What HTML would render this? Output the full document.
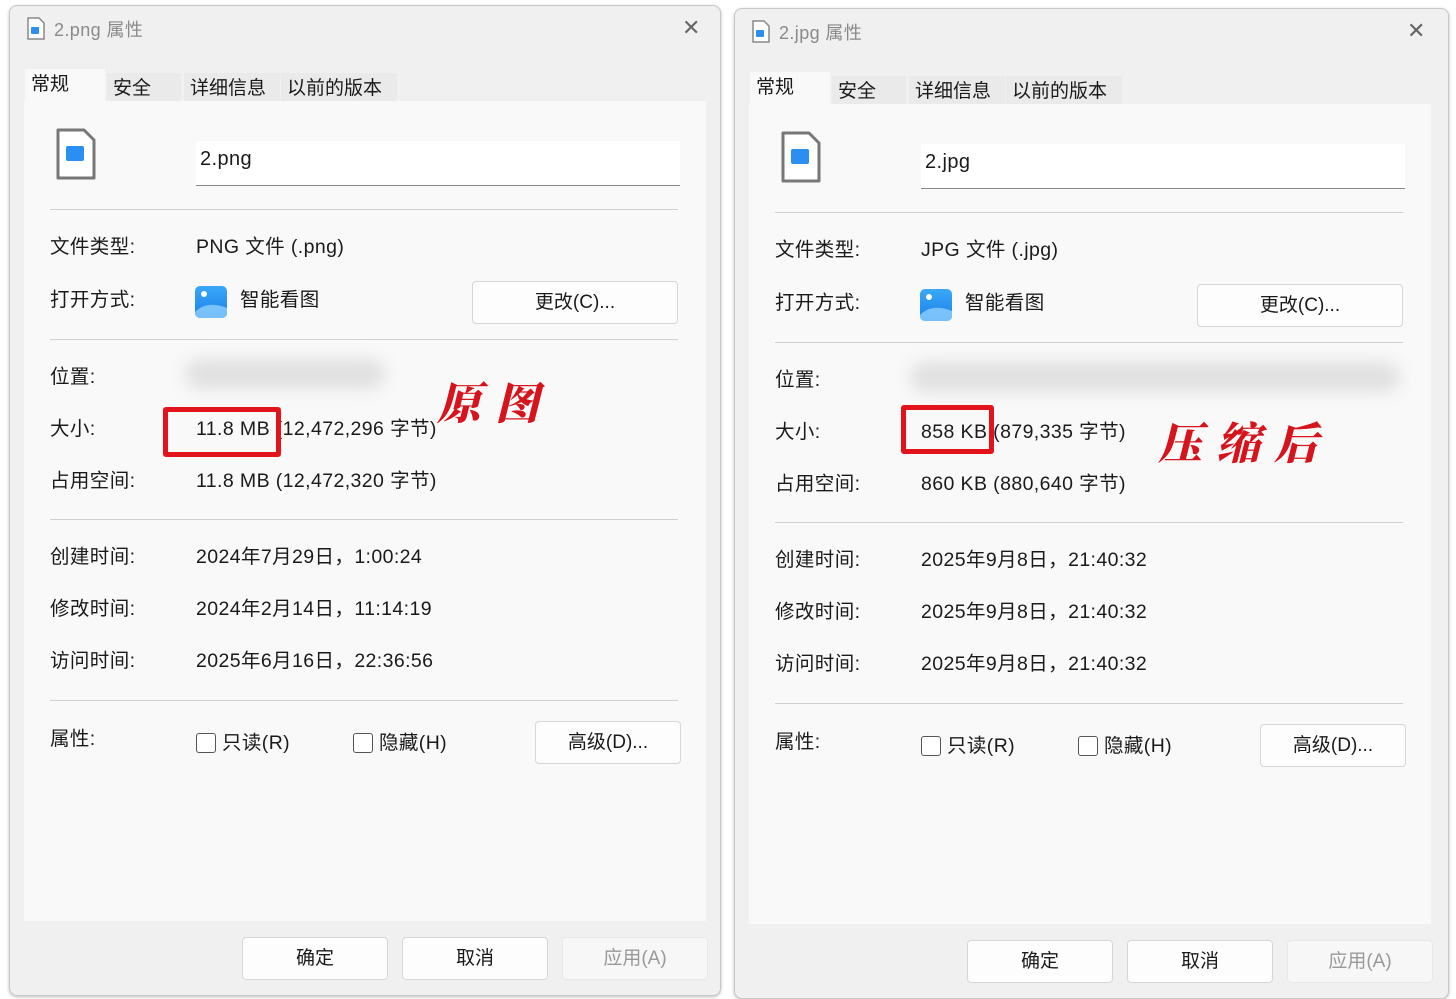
<!DOCTYPE html>
<html><head><meta charset="utf-8"><style>
body{margin:0;width:1456px;height:997px;background:#fff;position:relative;overflow:hidden;font-family:"Liberation Sans","Noto Sans CJK SC",sans-serif;color:#1a1a1a}
.win{position:absolute;top:0;left:0;width:710px;height:989px;background:#f0f0f0;border:1px solid #c8c8c8;border-radius:8px;box-shadow:0 1px 3px rgba(0,0,0,.25)}
.a{position:absolute;white-space:nowrap;font-size:19.5px;line-height:24px;letter-spacing:.4px}
.panel{position:absolute;left:14px;top:95px;width:682px;height:820px;background:#f9f9f9}
.tab{position:absolute;top:67px;height:29px;background:#eaeaea;font-size:19px;line-height:32px;padding:0 6px}
.sep{position:absolute;left:40px;width:628px;height:1px;background:#d0d0d0}
.btn{position:absolute;background:#fdfdfd;border:1px solid #d6d6d6;border-radius:4px;font-size:19px;text-align:center}
.cb{position:absolute;width:18px;height:18px;border:1px solid #555;border-radius:3px;background:#fff}
.red{position:absolute;border:5px solid #e3131b;border-radius:3px}
.cal{position:absolute;font-family:"Noto Serif CJK SC",serif;font-weight:900;font-style:italic;color:#d7141c;font-size:44px;text-shadow:0 0 2px #fff,0 0 3px #fff;letter-spacing:14px}
.blur{position:absolute;height:30px;background:#e0e0e0;filter:blur(8px);border-radius:15px}
</style></head><body>

<div class="win" style="left:9px;top:5px">
 <svg class="a" style="left:16px;top:11px" width="20" height="24" viewBox="0 0 20 24"><path d="M2 1h11l5 5v16H2z" fill="#fff" stroke="#888" stroke-width="1.5"/><rect x="5" y="10" width="8" height="7" rx="1" fill="#2a8ff0"/></svg>
 <div class="a" style="left:44px;top:12px;color:#8a8a8a;font-size:18px">2.png 属性</div>
 <div class="a" style="left:672px;top:10px;color:#666;font-size:22px">✕</div>
 <div class="tab" style="left:15px;top:63px;height:33px;width:68px;background:#f9f9f9">常规</div>
 <div class="tab" style="left:97px;width:62px">安全</div>
 <div class="tab" style="left:174px;width:84px">详细信息</div>
 <div class="tab" style="left:271px;width:104px">以前的版本</div>
 <div class="panel"></div>
 <svg class="a" style="left:45px;top:121px" width="42" height="54" viewBox="0 0 42 54"><path d="M3 3h26l10 10v38H3z" fill="#fff" stroke="#777" stroke-width="3" stroke-linejoin="round"/><rect x="11" y="19" width="18" height="15" rx="2" fill="#2a8ff0"/></svg>
 <div class="a" style="left:186px;top:135px;width:484px;height:44px;background:#fff;border-bottom:1px solid #888"></div>
 <div class="a" style="left:190px;top:141px;font-size:20px">2.png</div>
 <div class="sep" style="top:203px"></div>
 <div class="a" style="left:40px;top:229px">文件类型:</div><div class="a" style="left:186px;top:229px">PNG 文件 (.png)</div>
 <div class="a" style="left:40px;top:282px">打开方式:</div>
 <svg class="a" style="left:185px;top:280px" width="32" height="32"><defs><linearGradient id="g" x1="0" y1="0" x2="0" y2="1"><stop offset="0" stop-color="#3aa8f8"/><stop offset="1" stop-color="#1b7fe8"/></linearGradient></defs><rect width="32" height="32" rx="5" fill="url(#g)"/><circle cx="9" cy="8" r="3" fill="#fff"/><path d="M0 26 Q12 14 32 22 V27 a5 5 0 0 1-5 5H5a5 5 0 0 1-5-5z" fill="#8fd0ff" opacity=".8"/></svg>
 <div class="a" style="left:230px;top:282px">智能看图</div>
 <div class="btn" style="left:462px;top:275px;width:204px;height:41px;line-height:41px">更改(C)...</div>
 <div class="sep" style="top:333px"></div>
 <div class="a" style="left:40px;top:359px">位置:</div><div class="blur" style="left:175px;top:353px;width:200px"></div>
 <div class="a" style="left:40px;top:411px">大小:</div><div class="a" style="left:186px;top:411px">11.8 MB (12,472,296 字节)</div>
 <div class="a" style="left:40px;top:463px">占用空间:</div><div class="a" style="left:186px;top:463px">11.8 MB (12,472,320 字节)</div>
 <div class="sep" style="top:513px"></div>
 <div class="a" style="left:40px;top:539px">创建时间:</div><div class="a" style="left:186px;top:539px">2024年7月29日，1:00:24</div>
 <div class="a" style="left:40px;top:591px">修改时间:</div><div class="a" style="left:186px;top:591px">2024年2月14日，11:14:19</div>
 <div class="a" style="left:40px;top:643px">访问时间:</div><div class="a" style="left:186px;top:643px">2025年6月16日，22:36:56</div>
 <div class="sep" style="top:694px"></div>
 <div class="a" style="left:40px;top:721px">属性:</div>
 <div class="cb" style="left:186px;top:727px"></div><div class="a" style="left:212px;top:725px">只读(R)</div>
 <div class="cb" style="left:343px;top:727px"></div><div class="a" style="left:369px;top:725px">隐藏(H)</div>
 <div class="btn" style="left:525px;top:715px;width:144px;height:41px;line-height:41px">高级(D)...</div>
 <div class="btn" style="left:232px;top:931px;width:144px;height:41px;line-height:41px">确定</div>
 <div class="btn" style="left:392px;top:931px;width:144px;height:41px;line-height:41px">取消</div>
 <div class="btn" style="left:552px;top:931px;width:144px;height:41px;line-height:41px;color:#999;background:#f7f7f7;border-color:#e8e8e8">应用(A)</div>
</div>

<div class="win" style="left:734px;top:8px;width:713px">
 <svg class="a" style="left:16px;top:11px" width="20" height="24" viewBox="0 0 20 24"><path d="M2 1h11l5 5v16H2z" fill="#fff" stroke="#888" stroke-width="1.5"/><rect x="5" y="10" width="8" height="7" rx="1" fill="#2a8ff0"/></svg>
 <div class="a" style="left:44px;top:12px;color:#8a8a8a;font-size:18px">2.jpg 属性</div>
 <div class="a" style="left:672px;top:10px;color:#666;font-size:22px">✕</div>
 <div class="tab" style="left:15px;top:63px;height:33px;width:68px;background:#f9f9f9">常规</div>
 <div class="tab" style="left:97px;width:62px">安全</div>
 <div class="tab" style="left:174px;width:84px">详细信息</div>
 <div class="tab" style="left:271px;width:104px">以前的版本</div>
 <div class="panel"></div>
 <svg class="a" style="left:45px;top:121px" width="42" height="54" viewBox="0 0 42 54"><path d="M3 3h26l10 10v38H3z" fill="#fff" stroke="#777" stroke-width="3" stroke-linejoin="round"/><rect x="11" y="19" width="18" height="15" rx="2" fill="#2a8ff0"/></svg>
 <div class="a" style="left:186px;top:135px;width:484px;height:44px;background:#fff;border-bottom:1px solid #888"></div>
 <div class="a" style="left:190px;top:141px;font-size:20px">2.jpg</div>
 <div class="sep" style="top:203px"></div>
 <div class="a" style="left:40px;top:229px">文件类型:</div><div class="a" style="left:186px;top:229px">JPG 文件 (.jpg)</div>
 <div class="a" style="left:40px;top:282px">打开方式:</div>
 <svg class="a" style="left:185px;top:280px" width="32" height="32"><rect width="32" height="32" rx="5" fill="url(#g)"/><circle cx="9" cy="8" r="3" fill="#fff"/><path d="M0 26 Q12 14 32 22 V27 a5 5 0 0 1-5 5H5a5 5 0 0 1-5-5z" fill="#8fd0ff" opacity=".8"/></svg>
 <div class="a" style="left:230px;top:282px">智能看图</div>
 <div class="btn" style="left:462px;top:275px;width:204px;height:41px;line-height:41px">更改(C)...</div>
 <div class="sep" style="top:333px"></div>
 <div class="a" style="left:40px;top:359px">位置:</div><div class="blur" style="left:175px;top:353px;width:490px"></div>
 <div class="a" style="left:40px;top:411px">大小:</div><div class="a" style="left:186px;top:411px">858 KB (879,335 字节)</div>
 <div class="a" style="left:40px;top:463px">占用空间:</div><div class="a" style="left:186px;top:463px">860 KB (880,640 字节)</div>
 <div class="sep" style="top:513px"></div>
 <div class="a" style="left:40px;top:539px">创建时间:</div><div class="a" style="left:186px;top:539px">2025年9月8日，21:40:32</div>
 <div class="a" style="left:40px;top:591px">修改时间:</div><div class="a" style="left:186px;top:591px">2025年9月8日，21:40:32</div>
 <div class="a" style="left:40px;top:643px">访问时间:</div><div class="a" style="left:186px;top:643px">2025年9月8日，21:40:32</div>
 <div class="sep" style="top:694px"></div>
 <div class="a" style="left:40px;top:721px">属性:</div>
 <div class="cb" style="left:186px;top:727px"></div><div class="a" style="left:212px;top:725px">只读(R)</div>
 <div class="cb" style="left:343px;top:727px"></div><div class="a" style="left:369px;top:725px">隐藏(H)</div>
 <div class="btn" style="left:525px;top:715px;width:144px;height:41px;line-height:41px">高级(D)...</div>
 <div class="btn" style="left:232px;top:931px;width:144px;height:41px;line-height:41px">确定</div>
 <div class="btn" style="left:392px;top:931px;width:144px;height:41px;line-height:41px">取消</div>
 <div class="btn" style="left:552px;top:931px;width:144px;height:41px;line-height:41px;color:#999;background:#f7f7f7;border-color:#e8e8e8">应用(A)</div>
</div>

<div class="red" style="left:163px;top:407px;width:108px;height:40px"></div>
<div class="red" style="left:901px;top:405px;width:83px;height:39px"></div>
<div class="cal" style="left:437px;top:368px">原图</div>
<div class="cal" style="left:1158px;top:408px">压缩后</div>
</body></html>
